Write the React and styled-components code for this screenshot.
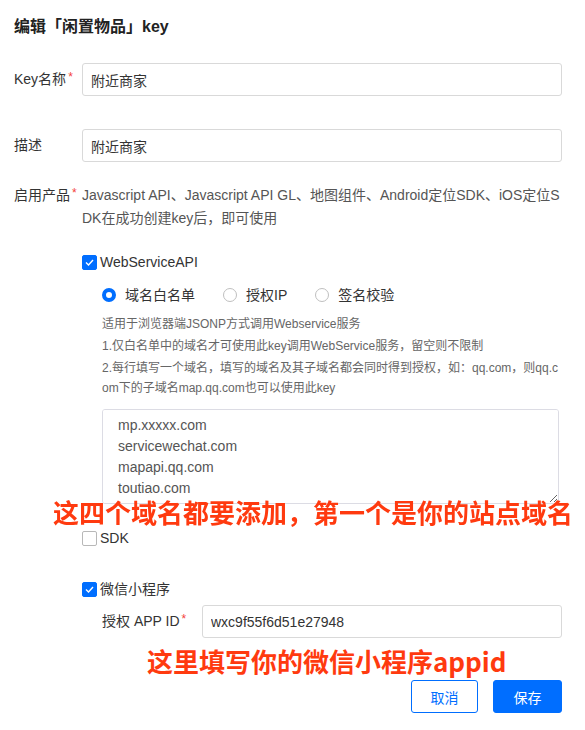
import React from 'react';
import styled, { createGlobalStyle } from 'styled-components';

const GlobalStyle = createGlobalStyle`
  html, body {
    margin: 0;
    padding: 0;
    background: #fff;
  }
  body {
    font-family: "Liberation Sans", Arial, "Noto Sans CJK SC", sans-serif;
    color: #333;
  }
`;

const Page = styled.div`
  width: 585px;
  box-sizing: border-box;
  padding: 16px 23px 0 14px;
`;

const Title = styled.h2`
  margin: 0;
  font-size: 16px;
  line-height: 22px;
  font-weight: bold;
  color: #222;
`;

const Row = styled.div`
  display: grid;
  grid-template-columns: ${(p) => p.labelWidth || 68}px 1fr;
  margin-top: ${(p) => p.top || 0}px;
`;

const Label = styled.div`
  font-size: 14px;
  line-height: ${(p) => p.lh || 33}px;
  color: #333;
  white-space: nowrap;
`;

const Star = styled.span`
  color: #f4433b;
  font-size: 12px;
  line-height: 1;
  vertical-align: 3px;
  margin-left: 2px;
`;

const Input = styled.input`
  box-sizing: border-box;
  width: 100%;
  height: 33px;
  border: 1px solid #d9d9d9;
  border-radius: 3px;
  padding: 0 8px;
  font-family: inherit;
  font-size: 14px;
  color: #333;
  outline: none;
`;

const ProductText = styled.div`
  font-size: 14px;
  line-height: 23px;
  color: #555;
  word-break: break-all;
`;

const CheckRow = styled.label`
  display: flex;
  align-items: center;
  gap: 3px;
  margin-top: ${(p) => p.top || 0}px;
  font-size: 14px;
  line-height: 20px;
  color: #333;
`;

const Box = styled.span`
  width: 15px;
  height: 15px;
  box-sizing: border-box;
  border-radius: 2px;
  display: inline-flex;
  align-items: center;
  justify-content: center;
  background: ${(p) => (p.checked ? '#006eff' : '#fff')};
  border: 1px solid ${(p) => (p.checked ? '#006eff' : '#b8b8b8')};
`;

const Nested = styled.div`
  padding-left: 20px;
`;

const RadioGroup = styled.div`
  display: flex;
  align-items: center;
  gap: 28px;
  margin-top: 13px;
`;

const RadioItem = styled.label`
  display: flex;
  align-items: center;
  gap: 9px;
  font-size: 14px;
  line-height: 20px;
  color: #333;
`;

const Circle = styled.span`
  width: 14px;
  height: 14px;
  box-sizing: border-box;
  border-radius: 50%;
  border: ${(p) => (p.checked ? '4px solid #006eff' : '1px solid #bfbfbf')};
  background: #fff;
`;

const Help = styled.div`
  margin-top: 9px;
`;

const HelpLine = styled.p`
  margin: 0 0 2px;
  font-size: 12px;
  line-height: 20px;
  color: #666;
  word-break: break-all;
`;

const AreaWrap = styled.div`
  position: relative;
  margin-top: 11px;
`;

const TextArea = styled.textarea`
  display: block;
  box-sizing: border-box;
  width: 457px;
  height: 95px;
  border: 1px solid #dcdce4;
  border-radius: 3px;
  padding: 5px 15px;
  font-family: inherit;
  font-size: 14px;
  line-height: 21px;
  color: #555;
  outline: none;
`;

const Note = styled.div`
  font-family: "Noto Sans CJK SC", sans-serif;
  font-weight: bold;
  font-size: 26px;
  line-height: 34px;
  color: #ff3a0f;
  white-space: nowrap;
`;

const OverNote = styled(Note)`
  position: absolute;
  left: -49px;
  top: 86px;
`;

const FlowNote = styled(Note)`
  margin: 6px 0 0 45px;
`;

const Actions = styled.div`
  display: flex;
  justify-content: flex-end;
  gap: 15px;
  margin-top: 2px;
`;

const Button = styled.button`
  height: 33px;
  width: ${(p) => p.w}px;
  box-sizing: border-box;
  border-radius: 3px;
  font-family: inherit;
  font-size: 14px;
  border: 1px solid #006eff;
  color: ${(p) => (p.primary ? '#fff' : '#006eff')};
  background: ${(p) => (p.primary ? '#006eff' : '#fff')};
`;

const Check = () => (
  <svg width="9" height="7" viewBox="0 0 9 7">
    <path d="M1 3.5 L3.5 6 L8 1" fill="none" stroke="#fff" strokeWidth="1.4" />
  </svg>
);

const CheckBox = ({ checked }) => <Box checked={checked}>{checked && <Check />}</Box>;

export default function App() {
  return (
    <Page>
      <GlobalStyle />
      <Title>编辑「闲置物品」key</Title>

      <Row top={25}>
        <Label>Key名称<Star>*</Star></Label>
        <Input defaultValue="附近商家" />
      </Row>

      <Row top={33}>
        <Label>描述</Label>
        <Input defaultValue="附近商家" />
      </Row>

      <Row top={22}>
        <Label lh={23}>启用产品<Star>*</Star></Label>
        <div>
          <ProductText>
            Javascript API、Javascript API GL、地图组件、Android定位SDK、iOS定位SDK在成功创建key后，即可使用
          </ProductText>

          <CheckRow top={22}>
            <CheckBox checked />
            WebServiceAPI
          </CheckRow>
          <Nested>
            <RadioGroup>
              <RadioItem><Circle checked />域名白名单</RadioItem>
              <RadioItem><Circle />授权IP</RadioItem>
              <RadioItem><Circle />签名校验</RadioItem>
            </RadioGroup>
            <Help>
              <HelpLine>适用于浏览器端JSONP方式调用Webservice服务</HelpLine>
              <HelpLine>1.仅白名单中的域名才可使用此key调用WebService服务，留空则不限制</HelpLine>
              <HelpLine>2.每行填写一个域名，填写的域名及其子域名都会同时得到授权，如：qq.com，则qq.com下的子域名map.qq.com也可以使用此key</HelpLine>
            </Help>
            <AreaWrap>
              <TextArea
                defaultValue={'mp.xxxxx.com\nservicewechat.com\nmapapi.qq.com\ntoutiao.com'}
              />
              <OverNote>这四个域名都要添加，第一个是你的站点域名</OverNote>
            </AreaWrap>
          </Nested>

          <CheckRow top={24}>
            <CheckBox />
            SDK
          </CheckRow>

          <CheckRow top={31}>
            <CheckBox checked />
            微信小程序
          </CheckRow>
          <Nested>
            <Row top={6} labelWidth={100}>
              <Label>授权 APP ID<Star>*</Star></Label>
              <Input defaultValue="wxc9f55f6d51e27948" />
            </Row>
            <FlowNote>这里填写你的微信小程序appid</FlowNote>
          </Nested>
        </div>
      </Row>

      <Actions>
        <Button w={67}>取消</Button>
        <Button w={69} primary>保存</Button>
      </Actions>
    </Page>
  );
}
